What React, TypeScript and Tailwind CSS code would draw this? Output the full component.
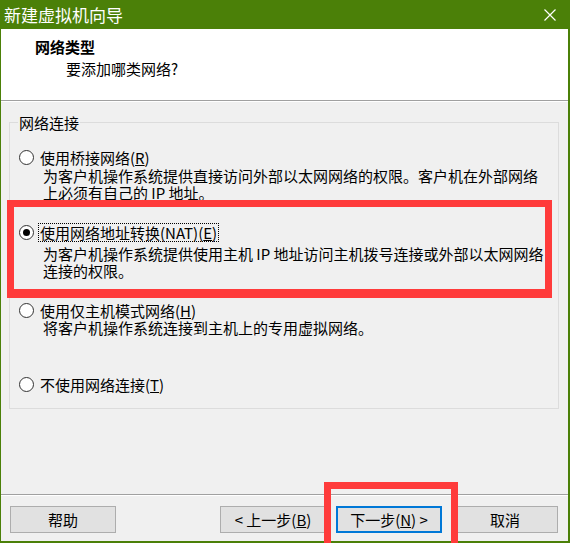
import React from 'react';

function Radio({ checked }: { checked?: boolean }) {
  return (
    <span className="flex h-[15px] w-[15px] shrink-0 items-center justify-center rounded-full border border-[#333333] bg-white">
      {checked && <span className="h-[7px] w-[7px] rounded-full bg-black"></span>}
    </span>
  );
}

function Button({ children, focused }: { children: React.ReactNode; focused?: boolean }) {
  return (
    <div
      className={
        focused
          ? 'flex h-[27px] w-[106px] items-center justify-center border-2 border-[#0078d7] bg-[#e1e1e1]'
          : 'flex h-[27px] w-[106px] items-center justify-center border border-[#adadad] bg-[#e1e1e1]'
      }
    >
      {children}
    </div>
  );
}

function App() {
  return (
    <div className="relative h-[543px] w-[570px] overflow-hidden bg-[#4b8008] pl-px pr-[2px] pb-[2px] font-['Noto_Sans_CJK_SC',sans-serif] text-[15px] leading-[17px] text-black">
      {/* Title bar */}
      <div className="flex h-[29px] items-center justify-between pl-[3px] pr-[12px]">
        <span className="text-[17px] leading-[20px] text-white">新建虚拟机向导</span>
        <svg width="12" height="12" viewBox="0 0 12 12" className="mt-px">
          <path d="M0.5 0.5 L11.5 11.5 M11.5 0.5 L0.5 11.5" stroke="white" strokeWidth="1.2" />
        </svg>
      </div>

      <div className="flex h-[512px] flex-col bg-[#f0f0f0]">
        {/* Header */}
        <div className="h-[71px] bg-white pl-[34px] pt-[9px]">
          <div className="font-bold">网络类型</div>
          <div className="mt-[5px] pl-[31px]">要添加哪类网络?</div>
        </div>
        <div className="h-px bg-[#a0a0a0]"></div>
        <div className="h-px bg-white"></div>

        {/* Group box */}
        <div className="relative ml-[8px] mt-[20px] h-[287px] w-[550px] border border-[#dcdcdc] pl-[9px] pt-[25px]">
          <span className="absolute left-[8px] top-[-9px] bg-[#f0f0f0] px-[1px]">网络连接</span>

          <div className="flex h-[18px] items-center">
            <Radio />
            <span className="ml-[4px] border border-transparent px-px">
              使用桥接网络(<u>R</u>)
            </span>
          </div>
          <div className="mt-px whitespace-nowrap pl-[24px]">
            <div>为客户机操作系统提供直接访问外部以太网网络的权限。客户机在外部网络</div>
            <div>上必须有自己的 IP 地址。</div>
          </div>

          <div className="mt-[22px] flex h-[18px] items-center">
            <Radio checked />
            <span className="ml-[4px] border border-dotted border-black px-px">
              使用网络地址转换(NAT)(<u>E</u>)
            </span>
          </div>
          <div className="mt-[4px] whitespace-nowrap pl-[24px]">
            <div>为客户机操作系统提供使用主机 IP 地址访问主机拨号连接或外部以太网网络</div>
            <div>连接的权限。</div>
          </div>

          <div className="mt-[22px] flex h-[18px] items-center">
            <Radio />
            <span className="ml-[4px] border border-transparent px-px">
              使用仅主机模式网络(<u>H</u>)
            </span>
          </div>
          <div className="whitespace-nowrap pl-[24px]">
            <div>将客户机操作系统连接到主机上的专用虚拟网络。</div>
          </div>

          <div className="mt-[39px] flex h-[18px] items-center">
            <Radio />
            <span className="ml-[4px] border border-transparent px-px">
              不使用网络连接(<u>T</u>)
            </span>
          </div>
        </div>

        {/* Footer */}
        <div className="mt-[85px] h-px bg-[#a0a0a0]"></div>
        <div className="h-px bg-white"></div>
        <div className="mt-[10px] flex items-center pl-[9px]">
          <Button>帮助</Button>
          <div className="ml-[104px] flex gap-[10px]">
            <Button>
              <span>&lt; 上一步(<u>B</u>)</span>
            </Button>
            <Button focused>
              <span>下一步(<u>N</u>) &gt;</span>
            </Button>
            <Button>取消</Button>
          </div>
        </div>
      </div>

      {/* Red highlight annotations */}
      <div className="absolute left-[7px] top-[200px] h-[98px] w-[545px] border-[7px] border-b-[9px] border-[#ff3b3b]"></div>
      <div className="absolute left-[324px] top-[482px] h-[80px] w-[134px] border-[7px] border-[#ff3b3b]"></div>
    </div>
  );
}

export default App;
